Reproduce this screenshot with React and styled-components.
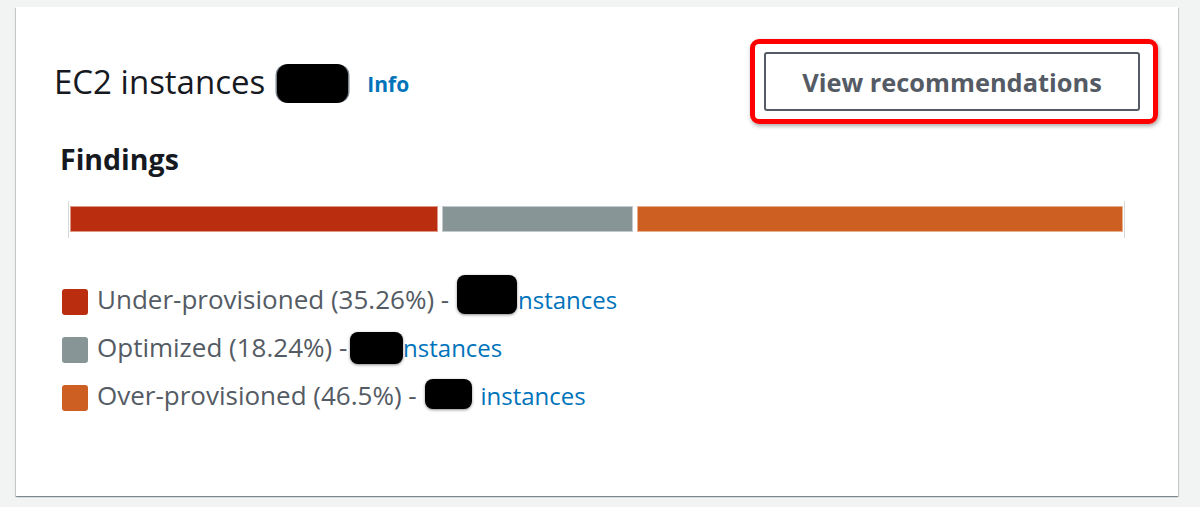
import styled, { createGlobalStyle } from 'styled-components'

const GlobalStyle = createGlobalStyle`
  html, body {
    margin: 0;
    padding: 0;
    background: #f2f3f3;
    font-family: "Open Sans", "Noto Sans", Arial, sans-serif;
  }
`

const segments = [
  { key: 'under', color: '#ba2e0f', share: 35.26 },
  { key: 'optimized', color: '#879596', share: 18.24 },
  { key: 'over', color: '#cc5f21', share: 46.5 },
]

const legend = [
  {
    key: 'under',
    color: '#ba2e0f',
    label: 'Under-provisioned (35.26%) - ',
    redact: { w: 60, h: 39, ml: 1, mr: -5, down: 5 },
  },
  {
    key: 'optimized',
    color: '#879596',
    label: 'Optimized (18.24%) - ',
    redact: { w: 53, h: 32, ml: -4, mr: -6, down: 7 },
  },
  {
    key: 'over',
    color: '#cc5f21',
    label: 'Over-provisioned (46.5%) - ',
    redact: { w: 47, h: 30, ml: 2, mr: 8, down: 4 },
  },
]

export default function App() {
  return (
    <>
      <GlobalStyle />
      <Page>
        <Card>
          <Header>
            <Title>
              EC2 instances
              <Counter />
              <InfoLink href="#">Info</InfoLink>
            </Title>
            <Highlight>
              <Button type="button">View recommendations</Button>
            </Highlight>
          </Header>

          <SectionTitle>Findings</SectionTitle>

          <Bar>
            {segments.map((s) => (
              <Segment key={s.key} $color={s.color} style={{ flexGrow: s.share }} />
            ))}
          </Bar>

          <Legend>
            {legend.map((item) => (
              <LegendRow key={item.key}>
                <Swatch $color={item.color} />
                <LegendText>
                  {item.label}
                  <Redacted
                    $w={item.redact.w}
                    $h={item.redact.h}
                    $ml={item.redact.ml}
                    $mr={item.redact.mr}
                    $down={item.redact.down}
                  />
                  <LegendLink href="#">instances</LegendLink>
                </LegendText>
              </LegendRow>
            ))}
          </Legend>
        </Card>
      </Page>
    </>
  )
}

const Page = styled.div`
  padding: 7px 22px 10px 16px;
`

const Card = styled.div`
  box-sizing: border-box;
  height: 489px;
  background: #ffffff;
  padding: 32px 20px 0 38px;
  box-shadow: 0 1px 1px 0 rgba(0, 28, 36, 0.3), 1px 1px 1px 0 rgba(0, 28, 36, 0.15),
    -1px 1px 1px 0 rgba(0, 28, 36, 0.15);
`

const Header = styled.div`
  display: flex;
  justify-content: space-between;
  align-items: center;
`

const Title = styled.h2`
  margin: 0;
  font-size: 33px;
  font-weight: 400;
  line-height: 1.2;
  color: #16191f;
  display: flex;
  align-items: center;
`

const Counter = styled.span`
  display: inline-block;
  width: 71px;
  height: 39px;
  margin: 3px 0 0 12px;
  background: #000;
  border-radius: 11px;
  box-shadow: -2px 0 0 -0.5px #7d8590, 2px 0 0 -0.5px #7d8590;
`

const InfoLink = styled.a`
  margin: 6px 0 0 19px;
  font-size: 21px;
  font-weight: 700;
  color: #0073bb;
  text-decoration: none;
`

const Highlight = styled.div`
  box-sizing: border-box;
  height: 85px;
  padding: 9px 13px 9px 9px;
  border: 5px solid #ff0000;
  border-radius: 9px;
  box-shadow: 1px 2px 4px rgba(0, 0, 0, 0.35);
  display: flex;
  align-items: center;
`

const Button = styled.button`
  box-sizing: border-box;
  width: 376px;
  height: 59px;
  border: 2px solid #545b64;
  border-radius: 3px;
  background: #fff;
  color: #545b64;
  font-family: inherit;
  font-size: 25.4px;
  font-weight: 700;
  padding: 0;
`

const SectionTitle = styled.h3`
  margin: 18px 0 0 6px;
  font-size: 28.5px;
  font-weight: 700;
  line-height: 1.2;
  color: #16191f;
`

const Bar = styled.div`
  display: flex;
  gap: 4px;
  height: 37px;
  margin: 25px 33px 0 14px;
  padding: 5px 1px 0 1px;
  box-sizing: border-box;
  border-left: 1px solid #d5dbdb;
  border-right: 1px solid #d5dbdb;
`

const Segment = styled.div`
  flex-basis: 0;
  height: 26px;
  box-sizing: border-box;
  background: ${(p) => p.$color};
  box-shadow: 0 0 0 1px rgba(255, 255, 255, 0.5) inset;
`

const Legend = styled.div`
  margin: 37px 0 0 8px;
  display: flex;
  flex-direction: column;
`

const LegendRow = styled.div`
  display: flex;
  align-items: center;
  gap: 9px;
  height: 48px;
`

const Swatch = styled.span`
  width: 26px;
  height: 26px;
  margin-top: 6px;
  border-radius: 3px;
  background: ${(p) => p.$color};
  flex: none;
`

const LegendText = styled.span`
  font-size: 26px;
  color: #545b64;
  white-space: pre;
`

const Redacted = styled.span`
  position: relative;
  z-index: 1;
  display: inline-block;
  vertical-align: baseline;
  width: ${(p) => p.$w}px;
  height: ${(p) => p.$h}px;
  margin-left: ${(p) => p.$ml}px;
  margin-right: ${(p) => p.$mr}px;
  margin-top: ${(p) => 10 - p.$h}px;
  margin-bottom: ${(p) => -p.$down}px;
  background: #000;
  border-radius: 8px;
  box-shadow: 0 1px 3px rgba(0, 0, 0, 0.45);
`

const LegendLink = styled.a`
  font-size: 24px;
  color: #0073bb;
  text-decoration: none;
`
